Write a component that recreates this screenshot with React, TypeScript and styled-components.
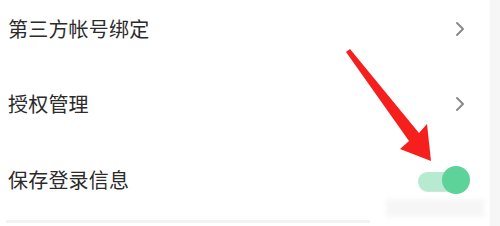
import React from "react";
import styled, { createGlobalStyle } from "styled-components";

const Global = createGlobalStyle`
  html, body { margin: 0; padding: 0; background: #ffffff; }
  body { width: 500px; height: 226px; overflow: hidden; }
  #root { width: 500px; height: 226px; }
`;

const Page = styled.div`
  position: relative;
  width: 500px;
  height: 226px;
  overflow: hidden;
  display: flex;
  background: #ffffff;
  font-family: "Noto Sans CJK SC", "Noto Sans", sans-serif;
`;

const Panel = styled.div`
  flex: 1;
  display: flex;
  flex-direction: column;
  margin-top: -9px;
`;

const EdgeStrip = styled.div`
  width: 10px;
  background: #f6f6f6;
`;

const Row = styled.div<{ $h: number }>`
  height: ${(p) => p.$h}px;
  display: flex;
  align-items: center;
  justify-content: space-between;
  padding: 0 24px 0 8px;
`;

const Label = styled.span`
  font-size: 20px;
  line-height: 24px;
  color: #2b2b2b;
  letter-spacing: 0.2px;
`;

const Divider = styled.div`
  height: 3px;
  width: 364px;
  margin-left: 6px;
  margin-top: 1px;
  background: #f3f3f3;
`;

const Chevron = () => (
  <svg width="12" height="18" viewBox="0 0 12 18">
    <path d="M3 3 L9 9 L3 15" fill="none" stroke="#8a8a8a" strokeWidth="2" strokeLinecap="round" strokeLinejoin="round" />
  </svg>
);

const Toggle = styled.div`
  position: relative;
  width: 52px;
  height: 28px;
  margin-right: -4px;
`;

const Track = styled.div`
  position: absolute;
  left: 0;
  top: 6px;
  width: 40px;
  height: 19px;
  border-radius: 10px;
  background: #b6ebd1;
  box-shadow: 0 2px 1px -1px #cfe3d8;
`;

const Knob = styled.div`
  position: absolute;
  right: 0;
  top: 0;
  width: 28px;
  height: 28px;
  border-radius: 50%;
  background: #5dd39a;
`;

const Watermark = styled.div`
  position: absolute;
  left: 386px;
  top: 199px;
  width: 98px;
  height: 18px;
  background: #f4f4f4;
  opacity: 0.8;
  filter: blur(2px);
`;

const ArrowSvg = styled.svg`
  position: absolute;
  left: 0;
  top: 0;
  pointer-events: none;
`;

export default function App() {
  return (
    <>
      <Global />
      <Page>
        <Panel>
          <Row $h={75}>
            <Label>第三方帐号绑定</Label>
            <Chevron />
          </Row>
          <Row $h={75}>
            <Label>授权管理</Label>
            <Chevron />
          </Row>
          <Row $h={78}>
            <Label>保存登录信息</Label>
            <Toggle>
              <Track />
              <Knob />
            </Toggle>
          </Row>
          <Divider />
        </Panel>
        <EdgeStrip />
        <Watermark />
        <ArrowSvg width="500" height="226" viewBox="0 0 500 226">
          <polygon
            points="346,52 350,49 419,133 427,124 431,161 400,149 409,141"
            fill="#f5201e"
          />
        </ArrowSvg>
      </Page>
    </>
  );
}
